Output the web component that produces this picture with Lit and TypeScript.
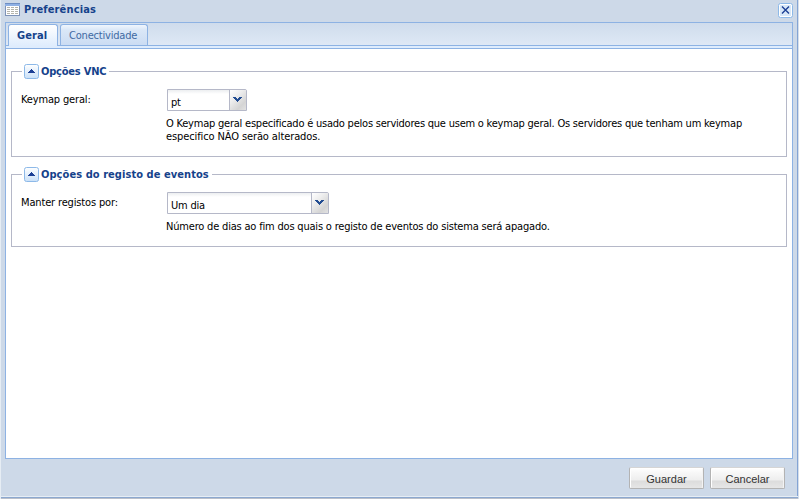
import { LitElement, html, css, svg } from "lit";
import { customElement, property } from "lit/decorators.js";

@customElement("ui-button")
class UiButton extends LitElement {
  static styles = css`
    :host { display: block; }
    button {
      display: block; box-sizing: border-box; width: 75px; height: 22px; padding: 1px 0 0; margin: 0;
      border: 1px solid #b3b3b3; border-radius: 2px; border-top-color: #d5d5d5;
      background: linear-gradient(#fff 0, #f7f7f7 5px, #eeeeee 12px, #dcdcdc 13px, #e6e6e6 100%);
      box-shadow: inset 1px 1px 0 #fff, inset -1px 0 0 #f3f3f3;
      font: 11px "Liberation Sans", Arial, sans-serif; color: #333;
    }
  `;
  render() { return html`<button><slot></slot></button>`; }
}

@customElement("ui-combo")
class UiCombo extends LitElement {
  @property() value = "";
  static styles = css`
    :host { display: flex; box-sizing: border-box; height: 22px; border: 1px solid #b5b8c8; border-top-right-radius: 2px; background: #fff; }
    .value { flex: 1; padding: 6px 0 0 3px; line-height: 14px; background: linear-gradient(#eceef0, #fff 4px); letter-spacing: -0.2px; }
    .trigger { width: 17px; box-sizing: border-box; border-left: 1px solid #b5b8c8; background: linear-gradient(135deg, #fff, #eee 35%, #d4d4d4 75%, #e2e2e2); }
    svg { display: block; margin: 7px 0 0 3px; }
  `;
  render() {
    return html`<div class="value">${this.value}</div>
      <div class="trigger"><svg width="9" height="6" shape-rendering="crispEdges"><path fill="#234d92" d="M0 0h3v1h1v1h1v-1h1v-1h3v1h-1v1h-1v1h-1v1h-1v1h-1v-1h-1v-1h-1v-1h-1v-1h-1z"/></svg></div>`;
  }
}

@customElement("ui-section")
class UiSection extends LitElement {
  @property() heading = "";
  static styles = css`
    :host { display: block; box-sizing: border-box; border: 1px solid #b5b8c8; }
    .legend { display: flex; align-items: center; width: fit-content; height: 17px; margin: -9px 0 0 10px; padding: 0 3px 0 2px; background: #fff; color: #15428b; font-weight: bold; }
    svg { display: block; margin-right: 2px; }
    .heading { white-space: nowrap; letter-spacing: var(--heading-spacing, 0); }
  `;
  render() {
    return html`<div class="legend">
        <svg width="15" height="15">
          <defs><linearGradient id="g" x2="0" y2="1"><stop stop-color="#fff"/><stop offset="1" stop-color="#c9e0f8"/></linearGradient></defs>
          <rect x=".5" y=".5" width="14" height="14" rx="2" fill="url(#g)" stroke="#8db9e8"/>
          <path d="M7 5h1v1h1v1h1v1h1v1H4V8h1V7h1V6h1z" fill="#1c3f95" shape-rendering="crispEdges"/>
        </svg><span class="heading">${this.heading}</span></div>
      <slot></slot>`;
  }
}

@customElement("app-root")
class AppRoot extends LitElement {
  static styles = css`
    :host {
      display: flex; flex-direction: column; box-sizing: border-box; width: 799px; height: 499px; overflow: hidden;
      background: #cdd9e8; border-left: 1px solid #e6edf4; border-right: 1px solid #d5dfeb;
      font: 11px "DejaVu Sans Condensed", "DejaVu Sans", Tahoma, sans-serif; color: #000;
    }
    .main { flex: 1; display: flex; flex-direction: column; min-height: 0; border-right: 1px solid #84a4d4; padding: 0 4px; }
    header { display: flex; height: 22px; flex: none; color: #15428b; font-weight: bold; }
    .grid { display: block; margin: 3px 4px 0 0; }
    .title { flex: 1; line-height: 14px; padding-top: 3px; letter-spacing: 0.14px; }
    .close { display: block; margin-top: 3px; }
    .panel { display: flex; flex-direction: column; box-sizing: border-box; height: 437px; border: 1px solid #8db2e3; background: #fff; }
    .tabs { display: flex; gap: 2px; height: 21px; padding: 1px 2px 0; background: linear-gradient(#cfdcec, #dee8f5); border-bottom: 1px solid #8db2e3; }
    .tab { box-sizing: border-box; height: 21px; border: 1px solid #8db2e3; border-bottom: 0; border-radius: 3px 3px 0 0; padding: 4px 0 0 8px; line-height: 14px; white-space: nowrap; }
    .active { width: 50px; height: 22px; color: #15428b; font-weight: bold; background: linear-gradient(#fff, #deecfd); letter-spacing: 0.1px; }
    .other { width: 88px; color: #416aa3; background: linear-gradient(#f0f6fd 0, #dae7f7 5px, #cbdcf3); letter-spacing: -0.2px; }
    .spacer { height: 2px; background: #deecfd; border-bottom: 1px solid #8db2e3; }
    .content { display: flex; flex-direction: column; gap: 17px; padding: 22px 5px 0; }
    .vnc { height: 86px; --heading-spacing: -0.2px; }
    .log { height: 73px; --heading-spacing: 0.06px; }
    .row { display: grid; grid-template-columns: 146px 1fr; padding: 9px 0 0 9px; line-height: 12px; }
    .label { padding-top: 5px; letter-spacing: -0.15px; }
    .small { width: 80px; }
    .wide { width: 162px; }
    .help { margin: 6px 0 0 -1px; line-height: 13px; white-space: nowrap; letter-spacing: -0.19px; }
    .long { letter-spacing: -0.222px; }
    .short { letter-spacing: -0.11px; }
    footer { display: flex; justify-content: flex-end; gap: 6px; padding: 8px 8px 0 0; }
    .bottom { height: 3px; flex: none; background: linear-gradient(#e6edf4 0 1px, #8ca8cf 1px 2px, #b9bfca 2px); }
  `;
  render() {
    return html`
      <div class="main">
        <header>
          <svg class="grid" width="15" height="13" shape-rendering="crispEdges">
            <path fill="#7e93b8" d="M0 0h15v13H0z"/><path fill="#fff" d="M1 3h13v9H1z"/><path fill="#8fb1e5" d="M0 0h15v3H0z"/><path fill="#6f8fc4" d="M0 0h15v1H0z"/>
            ${[4, 6, 8, 10].map(y => svg`<path fill="#b4b4ac" d="M2 ${y}h3v1H2zM6 ${y}h3v1H6zM10 ${y}h3v1h-3z"/>`)}
          </svg>
          <span class="title">Preferências</span>
          <svg class="close" width="15" height="15">
            <rect x=".5" y=".5" width="14" height="14" rx="2" fill="#fff" stroke="#8db9e8"/>
            <rect x="2" y="2" width="11" height="11" fill="#d8e8f8"/>
            <path d="M4 3.5l7 7M11 3.5l-7 7" stroke="#1c3f95" stroke-width="1.4"/>
          </svg>
        </header>
        <div class="panel">
          <nav class="tabs"><div class="tab active">Geral</div><div class="tab other">Conectividade</div></nav>
          <div class="spacer"></div>
          <div class="content">
            <ui-section class="vnc" heading="Opções VNC">
              <div class="row"><span class="label">Keymap geral:</span>
                <div><ui-combo class="small" value="pt"></ui-combo>
                  <div class="help"><span class="long">O Keymap geral especificado é usado pelos servidores que usem o keymap geral. Os servidores que tenham um keymap</span><br><span class="short">especifico NÃO serão alterados.</span></div></div></div>
            </ui-section>
            <ui-section class="log" heading="Opções do registo de eventos">
              <div class="row"><span class="label">Manter registos por:</span>
                <div><ui-combo class="wide" value="Um dia"></ui-combo>
                  <div class="help">Número de dias ao fim dos quais o registo de eventos do sistema será apagado.</div></div></div>
            </ui-section>
          </div>
        </div>
        <footer><ui-button>Guardar</ui-button><ui-button>Cancelar</ui-button></footer>
      </div>
      <div class="bottom"></div>
    `;
  }
}
